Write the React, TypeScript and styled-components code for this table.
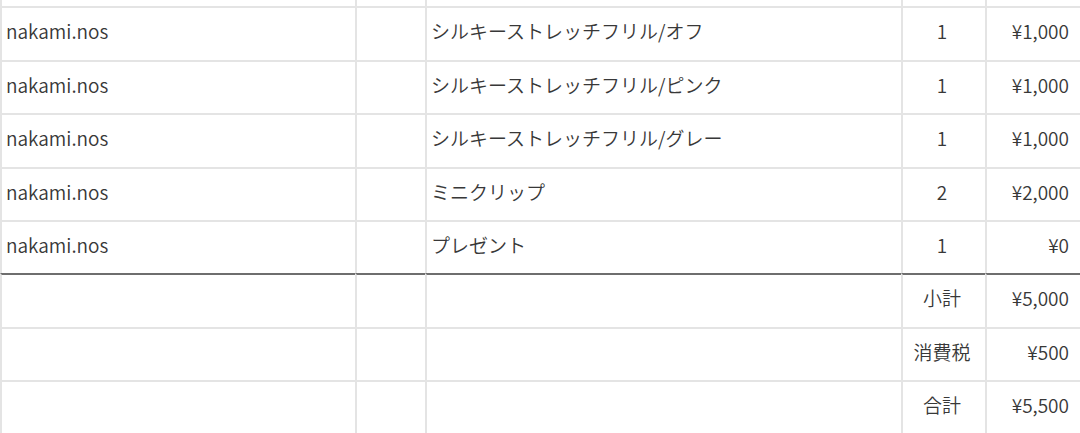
import React from "react";
import styled, { createGlobalStyle } from "styled-components";

const Global = createGlobalStyle`
  html, body { margin: 0; padding: 0; background: #ffffff; }
  body { overflow: hidden; }
`;

const Sheet = styled.div`
  display: grid;
  grid-template-columns: 355px 70px 476px 84px 1fr;
  grid-template-rows: 6px 54px 53px 54px 53px 53px 54px 53px 53px;
  width: 1080px;
  height: 433px;
  font-family: "Noto Sans CJK JP", "Noto Sans", sans-serif;
  font-size: 19px;
  font-weight: 350;
  color: #383838;
  background: #fff;
`;

type CellProps = {
  $align?: "left" | "center" | "right";
  $strong?: boolean;
};

const Cell = styled.div<CellProps>`
  box-sizing: border-box;
  display: flex;
  align-items: center;
  justify-content: ${(p) =>
    p.$align === "center" ? "center" : p.$align === "right" ? "flex-end" : "flex-start"};
  border-top: 2px solid ${(p) => (p.$strong ? "#6e6e6e" : "#e4e4e4")};
  border-left: 2px solid #e4e4e4;
  padding: 0 ${(p) => (p.$align === "right" ? "11px" : "4px")} 7px
    ${(p) => (p.$align === "left" ? "4px" : "0")};
  white-space: nowrap;
  overflow: hidden;
  line-height: 1;
`;

const TopCell = styled.div`
  border-left: 2px solid #e4e4e4;
`;

type Item = { shop: string; name: string; qty: number; price: string };

const items: Item[] = [
  { shop: "nakami.nos", name: "シルキーストレッチフリル/オフ", qty: 1, price: "¥1,000" },
  { shop: "nakami.nos", name: "シルキーストレッチフリル/ピンク", qty: 1, price: "¥1,000" },
  { shop: "nakami.nos", name: "シルキーストレッチフリル/グレー", qty: 1, price: "¥1,000" },
  { shop: "nakami.nos", name: "ミニクリップ", qty: 2, price: "¥2,000" },
  { shop: "nakami.nos", name: "プレゼント", qty: 1, price: "¥0" },
];

const totals = [
  { label: "小計", value: "¥5,000" },
  { label: "消費税", value: "¥500" },
  { label: "合計", value: "¥5,500" },
];

export default function App() {
  return (
    <>
      <Global />
      <Sheet>
        {[0, 1, 2, 3, 4].map((i) => (
          <TopCell key={`t${i}`} />
        ))}
        {items.map((it, i) => (
          <React.Fragment key={i}>
            <Cell $align="left">{it.shop}</Cell>
            <Cell />
            <Cell $align="left">{it.name}</Cell>
            <Cell $align="center">{it.qty}</Cell>
            <Cell $align="right">{it.price}</Cell>
          </React.Fragment>
        ))}
        {totals.map((t, i) => (
          <React.Fragment key={t.label}>
            <Cell $strong={i === 0} />
            <Cell $strong={i === 0} />
            <Cell $strong={i === 0} />
            <Cell $strong={i === 0} $align="center">{t.label}</Cell>
            <Cell $strong={i === 0} $align="right">{t.value}</Cell>
          </React.Fragment>
        ))}
      </Sheet>
    </>
  );
}
